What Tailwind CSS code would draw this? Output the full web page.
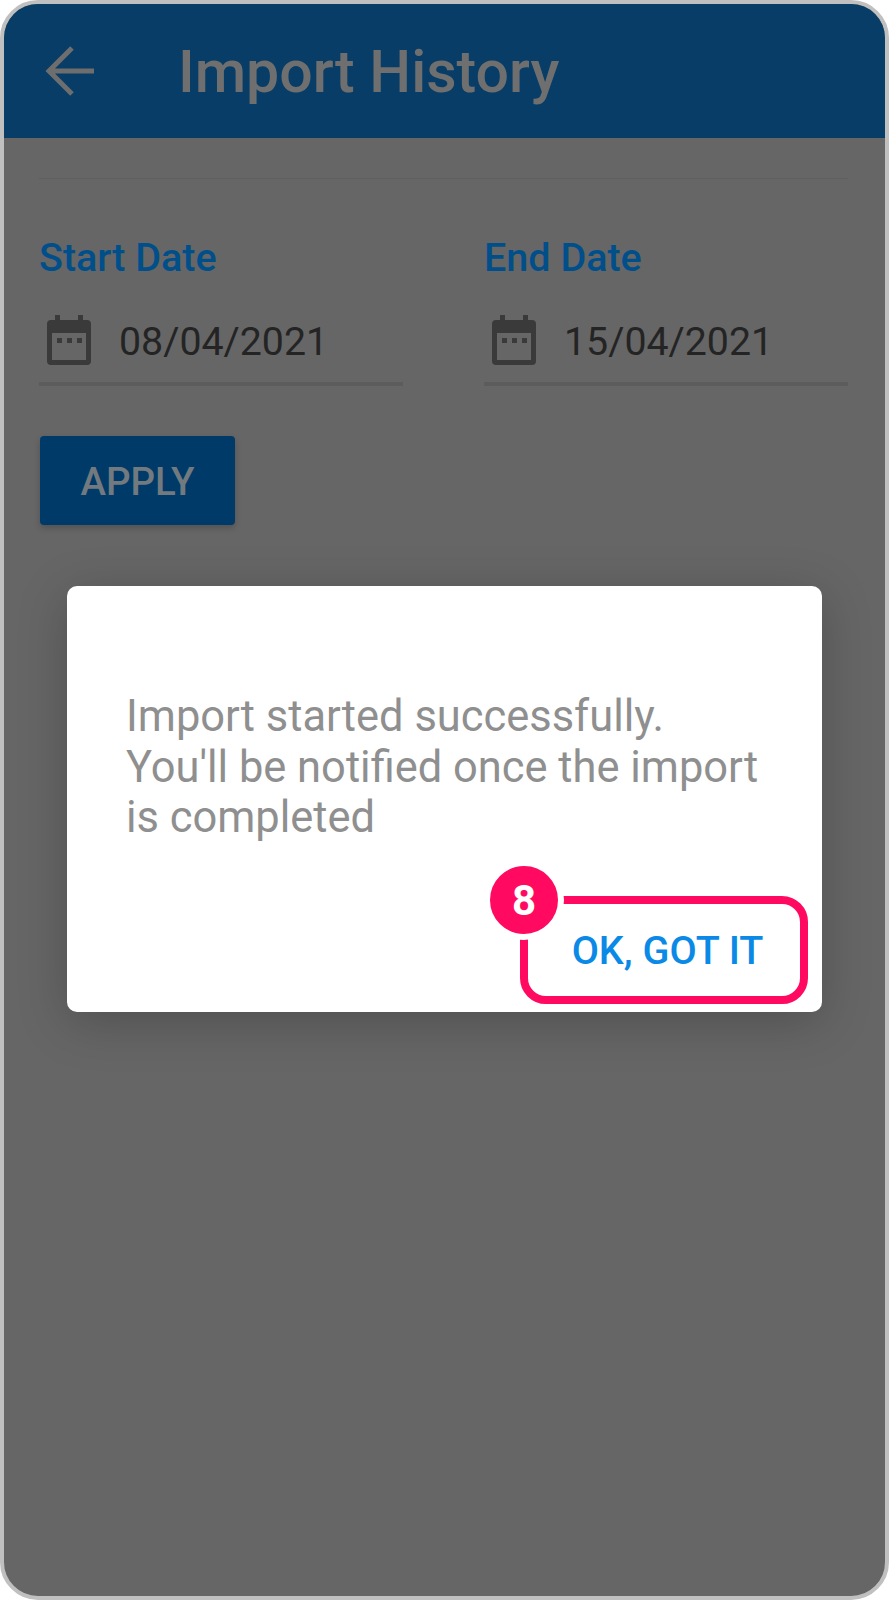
<!DOCTYPE html>
<html lang="en">
<head>
  <meta charset="UTF-8">
  <meta name="viewport" content="width=device-width, initial-scale=1">
  <title>Import History</title>
  <script src="https://cdn.jsdelivr.net/npm/@tailwindcss/browser@4"></script>
</head>
<body class="bg-white font-['Roboto',sans-serif]">
  <div class="relative h-[1600px] w-[889px] overflow-hidden rounded-[38px] border-4 border-[#c0c0c0] bg-[#666666]">

    <!-- App bar -->
    <header class="flex h-[134px] items-center bg-[#073d66]">
      <svg class="ml-[40px] h-[56px] w-[56px]" viewBox="0 0 56 56" fill="none" stroke="#6e6e6e" stroke-width="5">
        <path d="M50 28H6M28 5L5 28l23 23"/>
      </svg>
      <h1 class="ml-[78px] text-[59px] font-medium leading-none text-[#6f6f6f]">Import History</h1>
    </header>

    <main class="pl-[35px] pr-[37px]">
      <div class="mt-10 h-px bg-[#5f5f5f]"></div>

      <div class="mt-[57px] grid grid-cols-2 gap-x-[81px]">
        <div>
          <label class="block text-[39.5px] font-medium leading-[43px] text-[#004f8a]">Start Date</label>
          <div class="mt-[35px] flex h-[72px] items-center border-b-4 border-[#5c5c5c] pb-[10px]">
            <svg class="ml-[8px] -mt-[6px] h-[50px] w-[44px]" viewBox="0 0 44 50" fill="#3a3a3a">
              <path fill-rule="evenodd" d="M8 0h5v5h18V0h5v5h4a4 4 0 0 1 4 4v37a4 4 0 0 1-4 4H4a4 4 0 0 1-4-4V9a4 4 0 0 1 4-4h4zM5 18v27h34V18z"/>
              <path d="M10 23h5v5h-5zM20 23h5v5h-5zM30 23h5v5h-5z"/>
            </svg>
            <span class="ml-[28px] text-[39.3px] leading-none text-[#242424]">08/04/2021</span>
          </div>
        </div>
        <div>
          <label class="block text-[39.5px] font-medium leading-[43px] text-[#004f8a]">End Date</label>
          <div class="mt-[35px] flex h-[72px] items-center border-b-4 border-[#5c5c5c] pb-[10px]">
            <svg class="ml-[8px] -mt-[6px] h-[50px] w-[44px]" viewBox="0 0 44 50" fill="#3a3a3a">
              <path fill-rule="evenodd" d="M8 0h5v5h18V0h5v5h4a4 4 0 0 1 4 4v37a4 4 0 0 1-4 4H4a4 4 0 0 1-4-4V9a4 4 0 0 1 4-4h4zM5 18v27h34V18z"/>
              <path d="M10 23h5v5h-5zM20 23h5v5h-5zM30 23h5v5h-5z"/>
            </svg>
            <span class="ml-[28px] text-[39.3px] leading-none text-[#242424]">15/04/2021</span>
          </div>
        </div>
      </div>

      <button class="ml-px mt-[50px] h-[89px] w-[195px] rounded-[4px] bg-[#003a68] pt-[3px] text-[38.5px] font-medium text-[#727a80] shadow-[0_3px_6px_rgba(0,0,0,0.2)]">APPLY</button>
    </main>

    <!-- Dialog over the page -->
    <div class="absolute left-[63px] top-[582px] h-[426px] w-[755px] rounded-[10px] bg-white shadow-[0_10px_50px_rgba(0,0,0,0.22)]">
      <p class="ml-[59px] mt-[106px] text-[43.45px] leading-[50.5px] text-[#8f8f8f]">Import started successfully.<br>You'll be notified once the import<br>is completed</p>
      <div class="absolute left-[453px] top-[310px] flex h-[108px] w-[288px] items-center justify-center rounded-[26px] border-8 border-[#ff0a60] pl-[7px] pt-[2px]">
        <span class="text-[39.5px] font-medium leading-none text-[#0a8ae6]">OK, GOT IT</span>
        <span class="absolute left-[-44px] top-[-44px] box-content flex h-[68px] w-[68px] items-center justify-center rounded-full border-[6px] border-white bg-[#ff0a60] text-[42px] font-bold text-white">8</span>
      </div>
    </div>
  </div>
</body>
</html>
